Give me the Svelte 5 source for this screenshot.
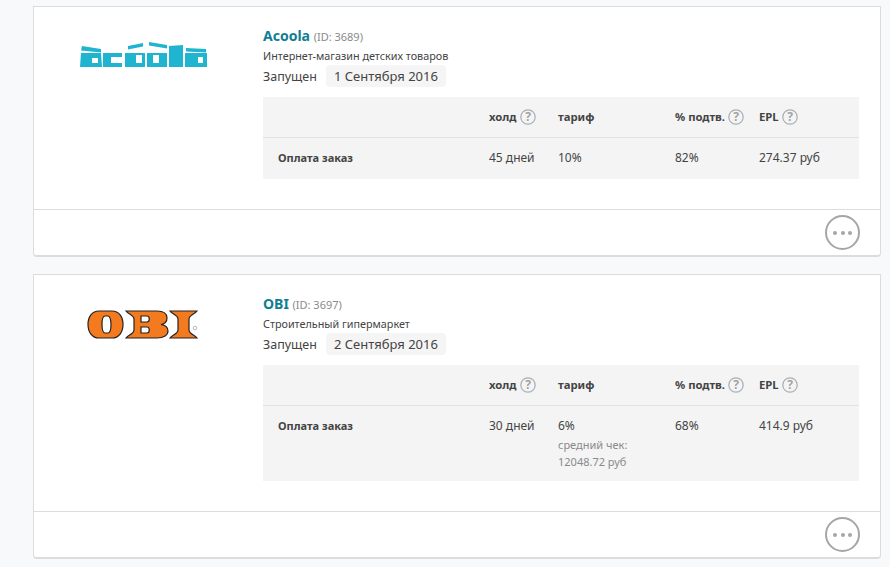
<script>
  const cards = [
    { name: 'Acoola', id: 3689, desc: 'Интернет-магазин детских товаров', date: '1 Сентября 2016', hold: '45 дней', rate: '10%', note: null, confirm: '82%', epl: '274.37 руб', logo: 'acoola' },
    { name: 'OBI', id: 3697, desc: 'Строительный гипермаркет', date: '2 Сентября 2016', hold: '30 дней', rate: '6%', note: ['средний чек:', '12048.72 руб'], confirm: '68%', epl: '414.9 руб', logo: 'obi' }
  ];
</script>

{#snippet help()}
  <svg class="help" viewBox="0 0 16 16" width="16" height="16" aria-hidden="true">
    <circle cx="8" cy="8" r="7.2" fill="none" stroke="#a9adb0" stroke-width="1.2" />
    <text x="8" y="12.2" text-anchor="middle" class="q">?</text>
  </svg>
{/snippet}

<main class="page">
  {#each cards as c}
    <article class="card">
      <div class="body">
        <div class="logo">
          {#if c.logo === 'acoola'}
            <svg width="127" height="27" viewBox="0 0 127 27" aria-label="Acoola">
              <g fill="#1fb5d0">
                <path d="M2 5 21 8 21 11.5 1 9.5Z"/>
                <path fill-rule="evenodd" d="M1 12 21 12 22 26 0 26ZM12 17 12 22 18 22 18 17Z"/>
                <path d="M23 12 42 12 42 16 31 16 31 22 42 22 42 26 23 26Z"/>
                <path fill-rule="evenodd" d="M45 12 65 12 65 26 45 26ZM56 14 56 22 62 22 62 14Z"/>
                <path d="M48 5 63 2 63 5.5 48 8.5Z"/>
                <path fill-rule="evenodd" d="M67 12 87 12 87 26 67 26ZM73 14 73 22 79 22 79 14Z"/>
                <path d="M69 1 87 4 87 7.5 69 4.5Z"/>
                <path d="M89 5 103 4 103 26 89 26Z"/>
                <path fill-rule="evenodd" d="M105 12 127 12 127 26 105 26ZM118 16 118 22 123 22 123 16Z"/>
                <path d="M106 7 126 8 126 11.5 106 10.5Z"/>
              </g>
            </svg>
          {:else}
            <svg class="obi" width="112" height="30" viewBox="0 0 112 30" aria-label="OBI">
              <g fill="#f47a1f" stroke="#222" stroke-width="1.2" fill-rule="evenodd">
                <path d="M12 1 25 1C32 1 36 7 36 14.5 36 22 32 28 25 28L12 28C5 28 1 22 1 14.5 1 7 5 1 12 1ZM18 6C16 6 15 10 15 14.5 15 19 16 23 18 23L21 23C23 23 24 19 24 14.5 24 10 23 6 21 6Z"/>
                <path d="M39 1 70 1C77 1 80 4 80 8 80 12 77 14 74 14.5 78 15 81 17 81 21 81 25 77 28 70 28L39 28C41 25 47 24 47 20L47 9C47 5 41 4 39 1ZM54 6 54 12 60 12C63 12 63 6 60 6ZM54 17 54 23 60 23C63 23 63 17 60 17Z"/>
                <path d="M83 1 110 1C108 4 102 5 102 9L102 20C102 24 108 25 110 28L83 28C85 25 91 24 91 20L91 9C91 5 85 4 83 1Z"/>
              </g>
              <circle cx="108" cy="18" r="1.8" fill="none" stroke="#888" stroke-width=".6"/>
            </svg>
          {/if}
        </div>
        <div class="info">
          <h2><span class="name">{c.name}</span> <span class="id">(ID: {c.id})</span></h2>
          <p class="desc">{c.desc}</p>
          <div class="launch">
            <span>Запущен</span>
            <span class="date">{c.date}</span>
          </div>
          <div class="table">
            <div class="row head">
              <div></div>
              <div class="th">холд {@render help()}</div>
              <div class="th">тариф</div>
              <div class="th">% подтв. {@render help()}</div>
              <div class="th">EPL {@render help()}</div>
            </div>
            <div class="row data">
              <div class="label">Оплата заказ</div>
              <div>{c.hold}</div>
              <div>
                {c.rate}
                {#if c.note}
                  <div class="note">{c.note[0]}<br />{c.note[1]}</div>
                {/if}
              </div>
              <div>{c.confirm}</div>
              <div>{c.epl}</div>
            </div>
          </div>
        </div>
      </div>
      <footer class="foot">
        <button class="more" aria-label="Ещё"><i></i><i></i><i></i></button>
      </footer>
    </article>
  {/each}
</main>

<style>
  :global(body) {
    margin: 0;
    background: #f8f9fb;
  }
  .page {
    box-sizing: border-box;
    height: 567px;
    overflow: hidden;
    padding: 6px 9px 0 33px;
    font-family: "Noto Sans", "Liberation Sans", sans-serif;
    color: #444;
  }
  .card {
    background: #fff;
    border: 1px solid #dcdcdc;
    border-bottom-width: 2px;
    border-radius: 0 0 4px 4px;
    margin-bottom: 17px;
  }
  .body {
    display: flex;
    padding: 19px 21px 30px 0;
  }
  .logo {
    box-sizing: border-box;
    width: 229px;
    flex: none;
    display: flex;
    justify-content: center;
    align-items: flex-start;
    padding: 15px 11px 0 0;
  }
  .obi {
    margin-top: 1px;
  }
  .info {
    flex: 1;
    min-width: 0;
  }
  h2 {
    margin: 0;
    font-size: 14px;
    line-height: 20px;
    font-weight: 400;
  }
  .name {
    font-weight: 700;
    color: #0f7e93;
  }
  .id {
    font-size: 11px;
    color: #8a8a8a;
  }
  .desc {
    margin: 0;
    font-size: 10.8px;
    line-height: 17px;
    color: #444;
  }
  .launch {
    display: flex;
    align-items: center;
    gap: 9px;
    font-size: 12.5px;
    height: 22px;
    margin: 1px 0 10px;
  }
  .date {
    background: #f5f5f5;
    border-radius: 4px;
    padding: 0 8px;
    line-height: 22px;
    font-size: 13px;
  }
  .table {
    background: #f4f4f4;
    font-size: 12px;
  }
  .row {
    display: grid;
    grid-template-columns: 226px 69px 117px 84px 1fr;
  }
  .row > div:first-child {
    padding-left: 15px;
  }
  .head {
    height: 41px;
    box-sizing: border-box;
    align-items: center;
    border-bottom: 1px solid #e2e2e2;
    padding-bottom: 1px;
  }
  .th {
    font-weight: 700;
    font-size: 11.3px;
    display: flex;
    align-items: center;
    gap: 3px;
  }
  .data {
    padding: 10px 0 11px;
    line-height: 20px;
  }
  .label {
    font-weight: 700;
    font-size: 11px;
  }
  .note {
    font-size: 11px;
    line-height: 17px;
    color: #8a8a8a;
  }
  .help {
    flex: none;
  }
  .q {
    font-size: 12px;
    font-weight: 700;
    fill: #a0a4a7;
  }
  .foot {
    border-top: 1px solid #dcdcdc;
    height: 45px;
    display: flex;
    justify-content: flex-end;
    align-items: center;
    padding-right: 20px;
  }
  .more {
    box-sizing: border-box;
    width: 35px;
    height: 35px;
    padding: 0;
    border: 2px solid #a6a6a6;
    border-radius: 50%;
    background: #fff;
    display: flex;
    justify-content: center;
    align-items: center;
    gap: 3.5px;
  }
  .more i {
    width: 4px;
    height: 4px;
    border-radius: 50%;
    background: #a6a6a6;
  }
</style>
